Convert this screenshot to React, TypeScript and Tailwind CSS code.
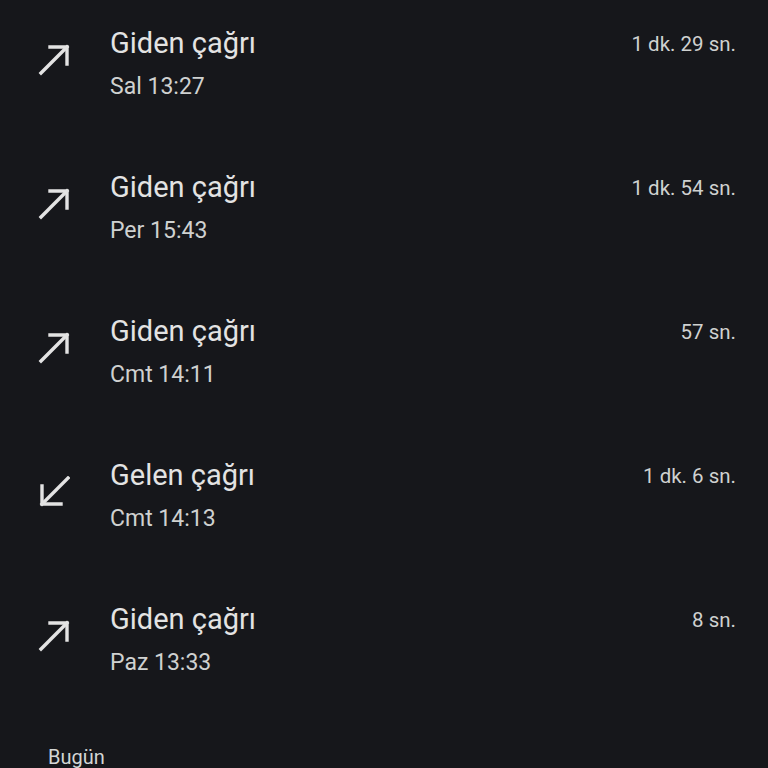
const calls = [
  { type: "out", title: "Giden çağrı", time: "Sal 13:27", duration: "1 dk. 29 sn." },
  { type: "out", title: "Giden çağrı", time: "Per 15:43", duration: "1 dk. 54 sn." },
  { type: "out", title: "Giden çağrı", time: "Cmt 14:11", duration: "57 sn." },
  { type: "in", title: "Gelen çağrı", time: "Cmt 14:13", duration: "1 dk. 6 sn." },
  { type: "out", title: "Giden çağrı", time: "Paz 13:33", duration: "8 sn." },
];

const CallIcon = ({ type }: { type: string }) => (
  <svg width="32" height="32" viewBox="0 0 32 32" fill="none" stroke="#e3e3e3" strokeWidth="3.4" strokeLinecap="square">
    {type === "out" ? (
      <>
        <path d="M3 29 L29 3" />
        <path d="M12 3 H29 V20" />
      </>
    ) : (
      <>
        <path d="M30 2 L4 28" />
        <path d="M23 28 H4 V10" />
      </>
    )}
  </svg>
);

export default function App() {
  return (
    <div className="w-[768px] h-[768px] overflow-hidden bg-[#16171b]" style={{ fontFamily: "Roboto, 'Noto Sans', sans-serif" }}>
      {calls.map((c, i) => (
        <div key={i} className="flex pl-[38px] pr-[32px] pt-[25px] h-[144px]">
          <div className="w-[72px] pt-[19px]">
            <CallIcon type={c.type} />
          </div>
          <div className="flex-1 flex flex-col gap-[10px]">
            <div className="text-[29px] leading-[36px] text-[#e3e3e3]">{c.title}</div>
            <div className="text-[23px] leading-[32px] text-[#cfd1d0]">{c.time}</div>
          </div>
          <div className="text-[20.5px] leading-[38px] text-[#cfd1d0]">{c.duration}</div>
        </div>
      ))}
      <div className="pl-[48px] pt-[23px] text-[20px] leading-[28px] text-[#d4d6d5]">Bugün</div>
    </div>
  );
}
